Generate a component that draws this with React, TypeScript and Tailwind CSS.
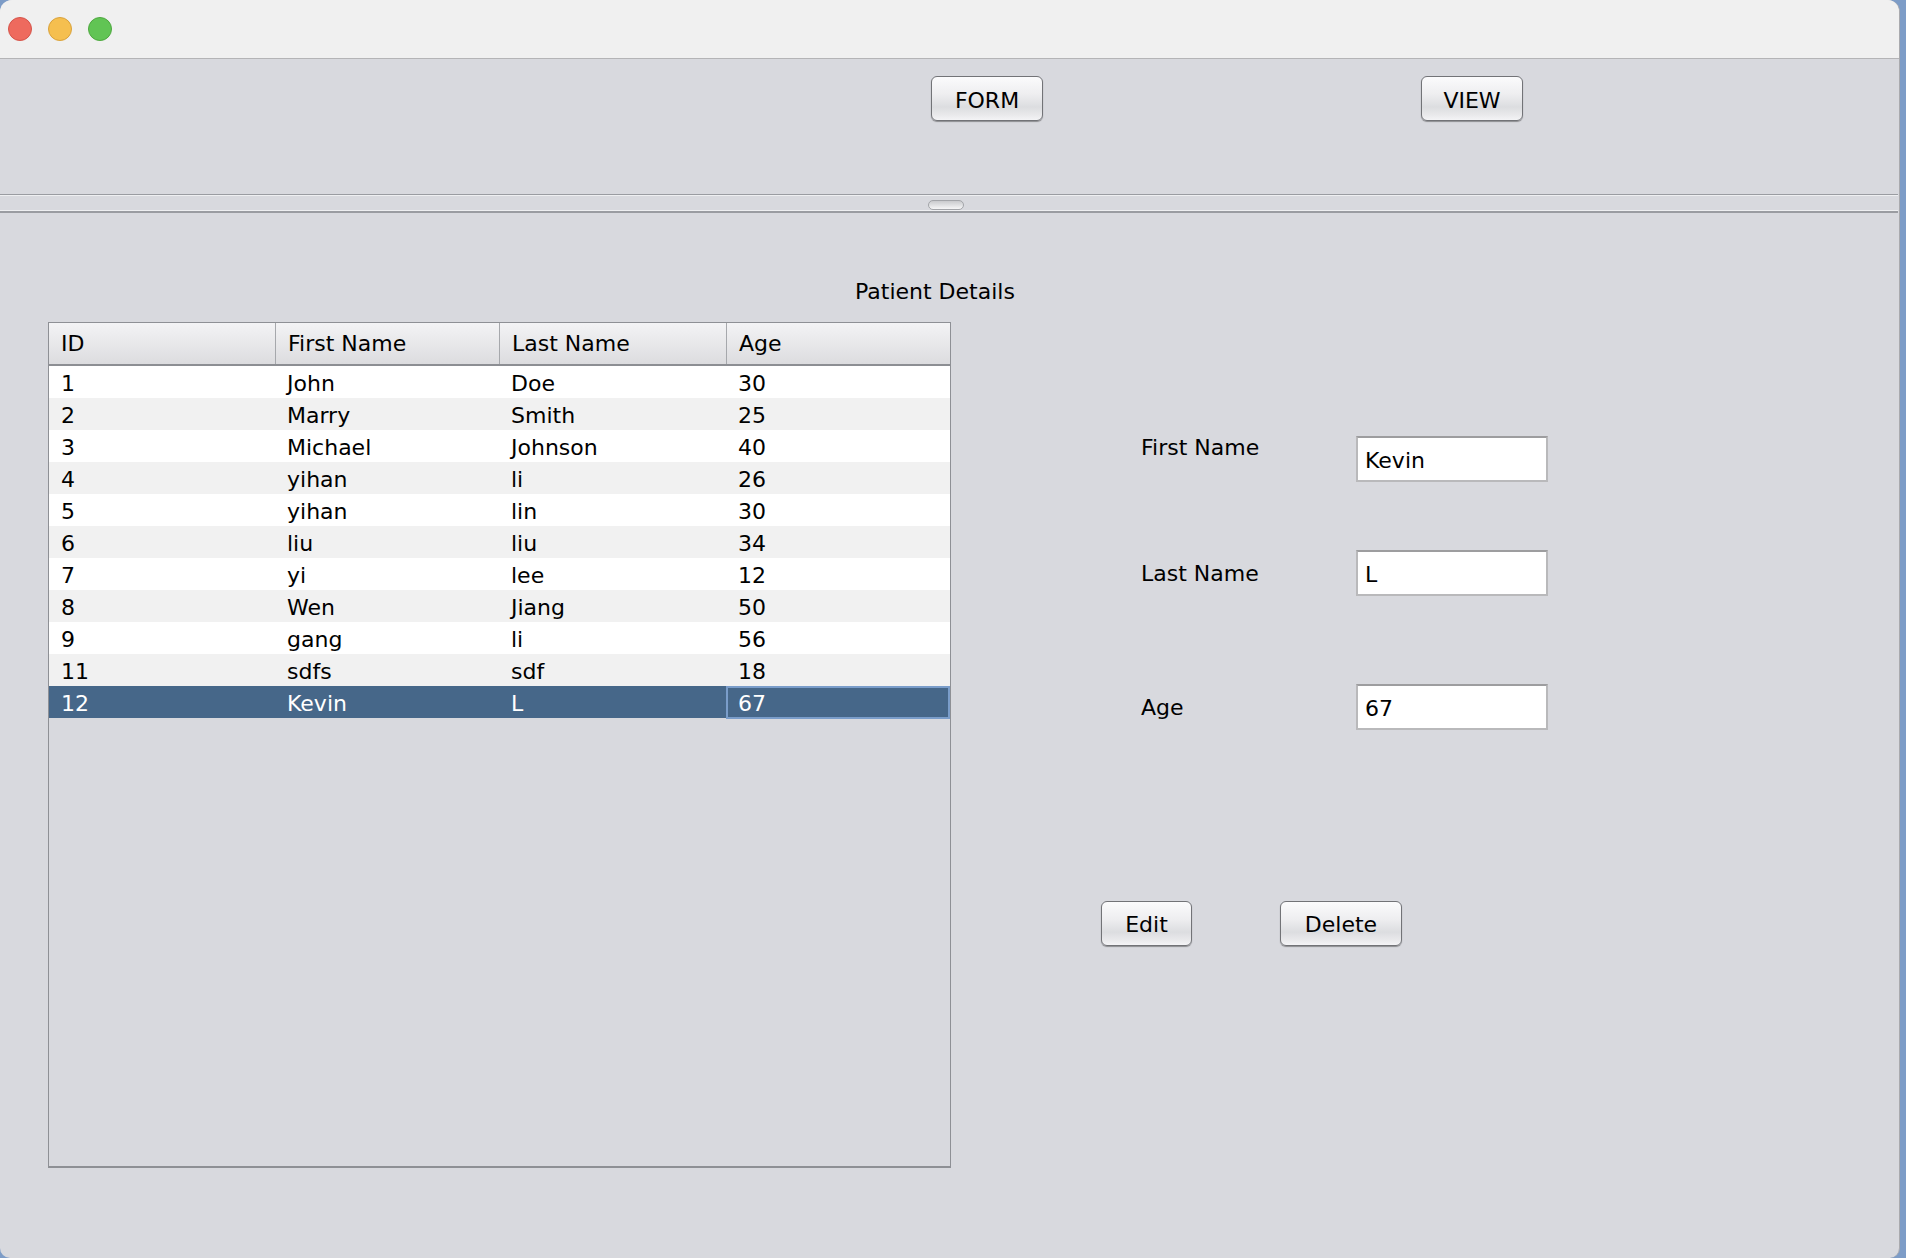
import React from "react";

const rows = [
  ["1", "John", "Doe", "30"],
  ["2", "Marry", "Smith", "25"],
  ["3", "Michael", "Johnson", "40"],
  ["4", "yihan", "li", "26"],
  ["5", "yihan", "lin", "30"],
  ["6", "liu", "liu", "34"],
  ["7", "yi", "lee", "12"],
  ["8", "Wen", "Jiang", "50"],
  ["9", "gang", "li", "56"],
  ["11", "sdfs", "sdf", "18"],
  ["12", "Kevin", "L", "67"],
];

const font = { fontFamily: '"DejaVu Sans", Verdana, sans-serif' };

function AquaButton({ label, w, pt }: { label: string; w: string; pt: string }) {
  return (
    <div
      className={`${w} h-[45px] rounded-[6px] border border-[#727377] flex items-center justify-center ${pt} text-[22px] leading-[26px] text-black shadow-[0_1px_1px_rgba(0,0,0,0.35)] bg-[linear-gradient(to_bottom,#fbfbfc_0%,#eeeef0_40%,#dcdde0_70%,#e9e9eb_88%,#f4f4f6_100%)]`}
    >
      {label}
    </div>
  );
}

function Field({ value, mt }: { value: string; mt: string }) {
  return (
    <div
      className={`${mt} w-[192px] h-[46px] bg-white border-2 border-[#b9b9bb] border-t-[#9d9d9f] flex items-center pl-[7px] pt-[3px] text-[22px] leading-[26px] text-black`}
    >
      {value}
    </div>
  );
}

export default function App() {
  return (
    <div className="w-[1906px] h-[1258px] bg-[#7d9cc7] flex overflow-hidden" style={font}>
      <div className="w-[1900px] h-[1258px] flex flex-col rounded-t-[12px] rounded-b-[10px] overflow-hidden bg-[#d8d9de] border-r border-[#a9aaae]">
        {/* Title bar */}
        <div className="h-[59px] shrink-0 bg-[#f0f0f0] border-b border-[#b4b4b6] flex items-center gap-[16px] pl-[8px]">
          <div className="w-[24px] h-[24px] rounded-full bg-[#ee6a5e] border border-[#d5544a]" />
          <div className="w-[24px] h-[24px] rounded-full bg-[#f5bf4f] border border-[#d9a23c]" />
          <div className="w-[24px] h-[24px] rounded-full bg-[#61c454] border border-[#4ea83f]" />
        </div>

        {/* Top pane */}
        <div className="h-[135px] shrink-0 flex items-start pt-[17px]">
          <div className="ml-[931px]">
            <AquaButton label="FORM" w="w-[112px]" pt="pt-[4px]" />
          </div>
          <div className="ml-[378px]">
            <AquaButton label="VIEW" w="w-[102px]" pt="pt-[4px]" />
          </div>
        </div>

        {/* Divider */}
        <div className="h-[19px] shrink-0 w-[1898px] flex flex-col">
          <div className="h-[1px] bg-[#9a9ca1]" />
          <div className="h-[1px] bg-[#eeeff1]" />
          <div className="flex-1 relative">
            <div className="absolute left-[928px] top-[4px] w-[36px] h-[10px] rounded-[5px] border border-[#a3a5a9] bg-[linear-gradient(to_bottom,#c9cacd,#f6f6f7)]" />
          </div>
          <div className="h-[1px] bg-[#eeeff1]" />
          <div className="h-[2px] bg-[#9a9ca1]" />
        </div>

        {/* Bottom pane */}
        <div className="flex-1 flex flex-col pt-[66px]">
          <div className="pl-[855px] text-[22px] leading-[26px] text-black">Patient Details</div>
          <div className="flex mt-[17px]">
            {/* Table */}
            <div className="ml-[48px] w-[903px] h-[846px] border border-b-2 border-[#8e9095] flex flex-col">
              <div className="h-[43px] shrink-0 grid grid-cols-[226px_224px_227px_1fr] border-b-2 border-[#8c8e93] bg-[linear-gradient(to_bottom,#f3f3f5_0%,#e8e8ea_50%,#dcdcdf_100%)] text-[22px] leading-[26px] text-black">
                {["ID", "First Name", "Last Name", "Age"].map((h, i) => (
                  <div
                    key={h}
                    className={`pl-[12px] pt-[8px] ${i > 0 ? "border-l border-[#a6a8ac]" : ""}`}
                  >
                    {h}
                  </div>
                ))}
              </div>
              {rows.map((r, idx) => {
                const selected = idx === rows.length - 1;
                const bg = selected ? "bg-[#466789]" : idx % 2 === 0 ? "bg-white" : "bg-[#f1f1f1]";
                return (
                  <div
                    key={idx}
                    className={`h-[32px] grid grid-cols-[226px_224px_227px_1fr] ${bg} ${selected ? "text-white" : "text-black"} text-[22px] leading-[26px]`}
                  >
                    {r.map((c, ci) =>
                      selected && ci === 3 ? (
                        <div key={ci} className="border-2 border-[#7a9dca] pl-[10px] pt-[3px]">
                          {c}
                        </div>
                      ) : (
                        <div key={ci} className="pl-[12px] pt-[5px]">
                          {c}
                        </div>
                      )
                    )}
                  </div>
                );
              })}
            </div>

            {/* Form */}
            <div className="flex flex-col pt-[113px] text-[22px] leading-[26px] text-black">
              <div className="flex items-start">
                <div className="ml-[190px] w-[215px]">First Name</div>
                <Field value="Kevin" mt="mt-[1px]" />
              </div>
              <div className="flex items-start mt-[68px]">
                <div className="ml-[190px] w-[215px] mt-[11px]">Last Name</div>
                <Field value="L" mt="mt-0" />
              </div>
              <div className="flex items-start mt-[88px]">
                <div className="ml-[190px] w-[215px] mt-[11px]">Age</div>
                <Field value="67" mt="mt-0" />
              </div>
              <div className="flex items-start mt-[171px] ml-[150px] gap-[88px]">
                <AquaButton label="Edit" w="w-[91px]" pt="pt-[2px]" />
                <AquaButton label="Delete" w="w-[122px]" pt="pt-[2px]" />
              </div>
            </div>
          </div>
        </div>
      </div>
    </div>
  );
}
